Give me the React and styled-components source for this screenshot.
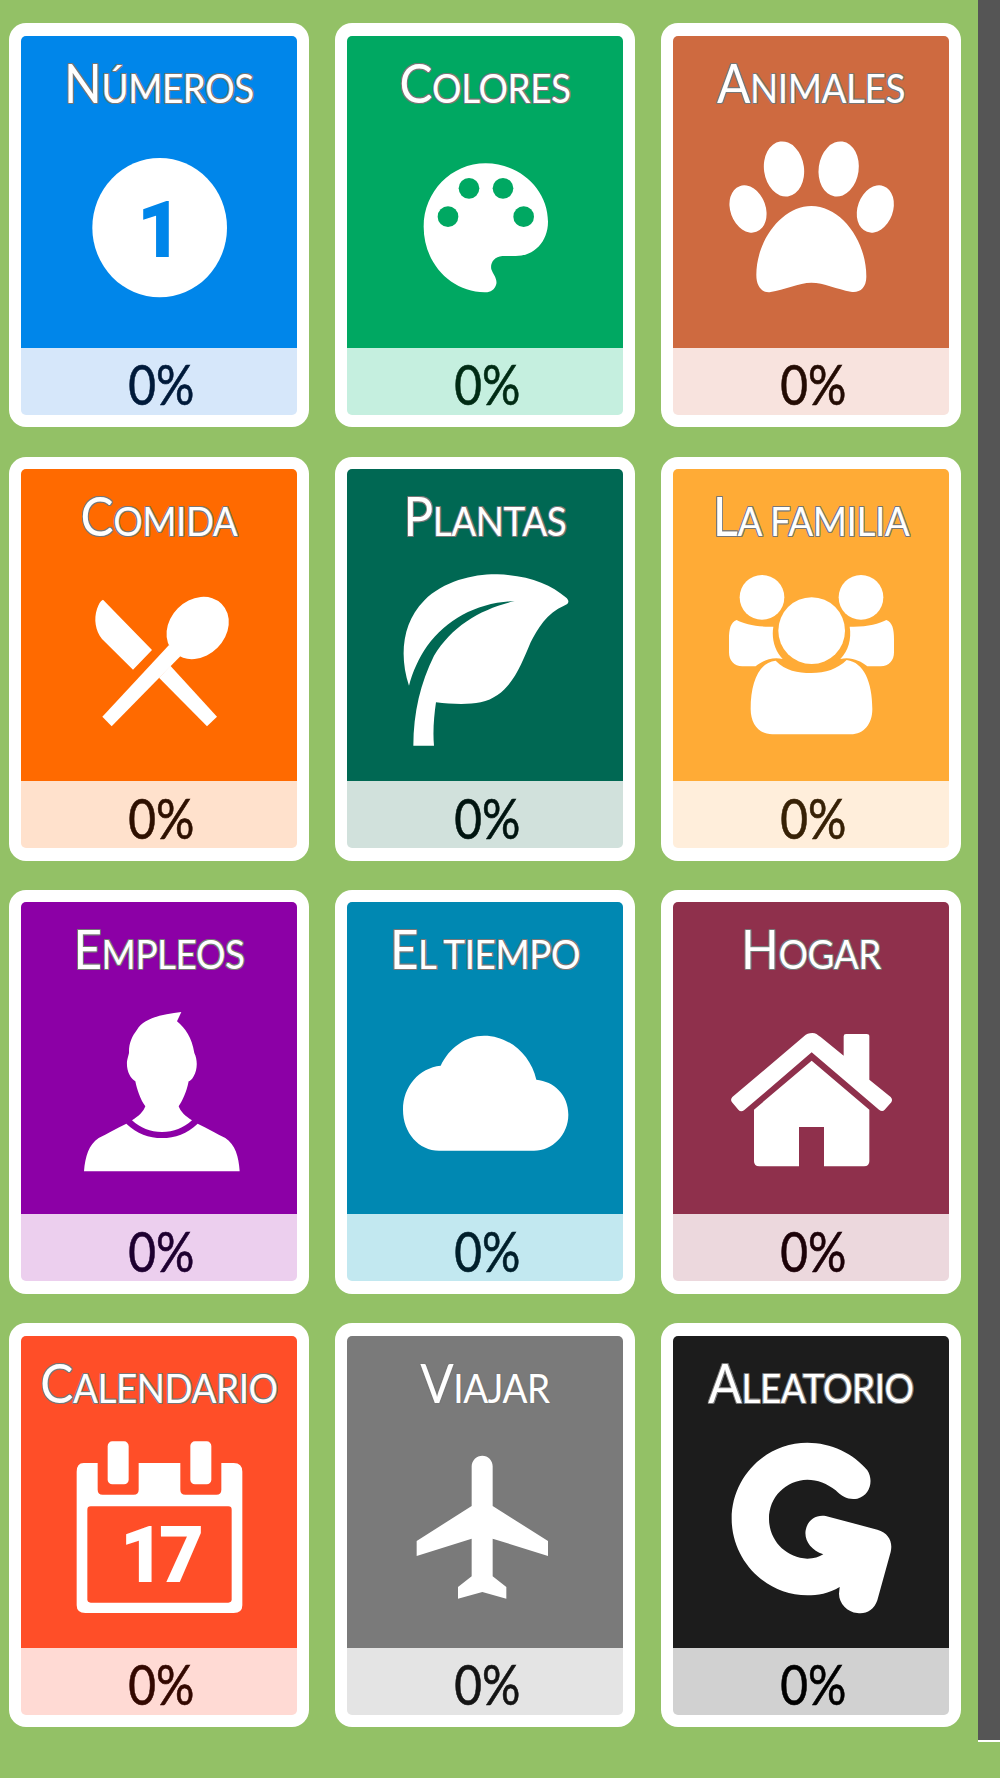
import React from "react";
import styled, { createGlobalStyle } from "styled-components";

const Global = createGlobalStyle`
  html, body {
    margin: 0;
    padding: 0;
    background: #93c166;
  }
`;

const Page = styled.div`
  display: flex;
  align-items: flex-start;
  justify-content: space-between;
  width: 1000px;
  height: 1778px;
  overflow: hidden;
  background: #93c166;
`;

const Grid = styled.section`
  display: grid;
  grid-template-columns: repeat(3, 300px);
  grid-auto-rows: 404px;
  column-gap: 26px;
  row-gap: 29.3px;
  padding: 23.3px 0 0 9px;
`;

const Card = styled.article`
  display: flex;
  flex-direction: column;
  box-sizing: border-box;
  padding: 12.5px 12px;
  background: #fff;
  border-radius: 17px;
`;

const Panel = styled.div`
  flex: 1;
  min-height: 0;
  overflow: hidden;
  background: ${props => props.color};
  border-radius: 5px 5px 0 0;
`;

const Title = styled.h2`
  box-sizing: border-box;
  height: 92px;
  margin: 0;
  padding-top: 18px;
  overflow: visible;
  font-family: "Lato", sans-serif;
  font-size: 41px;
  line-height: 56px;
  font-weight: 400;
  letter-spacing: -0.5px;
  white-space: nowrap;
  text-align: center;
  text-transform: uppercase;
  color: #fff;
  transform: scaleX(0.9);
  text-shadow: 1px 0 0 #777, -1px 0 0 #777, 0 1px 0 #777, 0 -1px 0 #777,
    1px 1px 0 #777, -1px -1px 0 #777, 1px -1px 0 #777, -1px 1px 0 #777;

  &::first-letter {
    font-size: 55px;
  }
`;

const IconSvg = styled.svg`
  display: block;
  width: 275px;
  height: 220px;
  margin: 0 auto;
  fill: #fff;
`;

const Footer = styled.div`
  display: flex;
  align-items: center;
  justify-content: center;
  height: 67px;
  background: ${props => props.color};
  border-radius: 0 0 5px 5px;
`;

const Percent = styled.span`
  display: block;
  margin-left: 4px;
  padding-top: 4px;
  font-family: "Lato", sans-serif;
  font-size: 57px;
  line-height: 62px;
  color: ${props => props.color};
  -webkit-text-stroke: 0.6px ${props => props.color};
  transform: scaleX(0.84);
`;

const ScrollThumb = styled.div`
  flex: none;
  width: 22px;
  height: 1740px;
  background: #555555;
  border-bottom: 2px solid #fff;
`;

const Numeral = styled.text`
  font-family: "Roboto", sans-serif;
  font-weight: 700;
  stroke-width: 6px;
`;

// all icons are drawn in the coordinates of the 3x zoom, the viewBox shifts them into the panel
const box = (col, row) => `${[65, 52, 40][col]} ${[384, 336, 343, 353][row]} 825 660`;

const NumberIcon = ({ bg }) => (
  <IconSvg viewBox={box(0, 0)}>
    <ellipse cx="478" cy="683" rx="202" ry="209" />
    <Numeral x="413" y="767" fontSize="228" fill={bg} stroke={bg}>1</Numeral>
  </IconSvg>
);

const PaletteIcon = ({ bg }) => (
  <IconSvg viewBox={box(1, 0)}>
    <path d="M465 490C570 490 652 570 652 665C652 725 610 768 555 768L515 768C490 770 478 790 482 808C488 825 500 835 497 852C492 870 478 878 462 877C360 875 279 790 279 680C279 575 362 490 465 490Z" />
    <circle cx="415" cy="565" r="31" fill={bg} />
    <circle cx="517" cy="565" r="31" fill={bg} />
    <circle cx="352" cy="650" r="31" fill={bg} />
    <circle cx="579" cy="650" r="31" fill={bg} />
  </IconSvg>
);

const PawIcon = () => (
  <IconSvg viewBox={box(2, 0)}>
    <ellipse cx="370" cy="507" rx="60" ry="83" transform="rotate(-8 370 507)" />
    <ellipse cx="534" cy="507" rx="60" ry="83" transform="rotate(8 534 507)" />
    <ellipse cx="262" cy="627" rx="53" ry="73" transform="rotate(-20 262 627)" />
    <ellipse cx="644" cy="627" rx="53" ry="73" transform="rotate(20 644 627)" />
    <path d="M452 618C540 618 617 720 617 830C617 865 595 880 570 875C530 868 490 848 452 848C415 848 370 870 330 876C305 880 287 860 287 825C287 720 365 618 452 618Z" />
  </IconSvg>
);

const FoodIcon = () => (
  <IconSvg viewBox={box(0, 1)}>
    <path d="M308 452L455 603L398 662L305 570C285 545 280 510 290 480C295 465 300 455 308 452Z" />
    <path d="M510 650L650 803L620 832L476 686Z" />
    <ellipse cx="592" cy="537" rx="84" ry="102" transform="rotate(45 592 537)" />
    <path d="M506 588L540 622L334 832L306 803Z" />
  </IconSvg>
);

const LeafIcon = () => (
  <IconSvg viewBox={box(1, 1)}>
    <path d="M235 710C205 620 215 520 280 455C340 395 430 375 500 376C590 378 660 405 705 445C718 455 715 465 700 470C650 490 620 540 600 580C570 650 540 740 450 760C410 768 360 765 316 760C310 800 306 850 310 890L248 890C248 790 270 700 310 620C365 530 450 480 552 456C440 460 350 510 290 590C265 625 245 670 235 710Z" />
  </IconSvg>
);

const FamilyIcon = () => (
  <IconSvg viewBox={box(2, 1)}>
    <circle cx="304" cy="445" r="67" />
    <circle cx="601" cy="445" r="67" />
    <circle cx="453" cy="545" r="100" />
    <path d="M228 513C250 525 290 535 338 533C332 570 342 605 366 630C335 622 305 635 285 652L245 652C220 652 205 635 205 610L205 570C205 540 210 520 228 513Z" />
    <path d="M677 513C655 525 615 535 567 533C573 570 563 605 539 630C570 622 600 635 620 652L660 652C685 652 700 635 700 610L700 570C700 540 695 520 677 513Z" />
    <path d="M345 635C375 665 410 672 452 672C495 672 530 660 558 633C610 640 635 700 635 780C635 825 610 856 570 856L335 856C295 856 270 825 270 780C270 700 295 640 345 635Z" />
  </IconSvg>
);

const PersonIcon = () => (
  <IconSvg viewBox={box(0, 2)}>
    <path d="M543 397L530 425C555 445 575 475 582 520C592 540 592 570 580 590C575 600 568 605 565 605C558 640 545 665 535 680C540 695 555 710 575 722C550 745 520 757 485 757C450 757 420 745 395 722C415 710 430 695 435 680C420 660 410 630 405 605C390 595 378 575 380 545C382 535 385 525 386 520C385 490 395 470 410 450C430 415 490 403 543 397Z" />
    <path d="M378 732C410 762 445 775 485 775C525 775 560 762 592 732C620 745 650 762 675 775C705 795 715 830 718 875L251 875C255 830 265 795 295 775C320 762 350 745 378 732Z" />
  </IconSvg>
);

const CloudIcon = () => (
  <IconSvg viewBox={box(1, 2)}>
    <path d="M330 558C355 505 405 468 460 468C535 468 600 525 617 600C670 605 713 645 713 705C713 765 665 813 610 813L325 813C265 813 217 760 217 690C217 620 265 565 330 558Z" />
  </IconSvg>
);

const HouseIcon = () => (
  <IconSvg viewBox={box(2, 2)}>
    <path d="M455 460C465 460 470 465 480 472L549 528L549 470Q549 463 556 463L618 463Q626 463 626 470L626 600L690 652Q697 660 692 668L672 690Q665 698 655 690L453 518L250 692Q240 698 233 690L214 668Q208 660 215 652L430 470Q440 460 455 460Z" />
    <path d="M453 543L626 690L626 845Q626 860 610 860L490 860L490 742L415 742L415 860L296 860Q280 860 280 845L280 690Z" />
  </IconSvg>
);

const CalendarIcon = ({ bg }) => (
  <IconSvg viewBox={box(0, 3)}>
    <path d="M250 458L292 458L292 538Q292 553 307 553L400 553Q415 553 415 538L415 458L540 458L540 538Q540 553 555 553L648 553Q663 553 663 538L663 458L700 458Q726 458 726 484L726 885Q726 908 700 908L255 908Q229 908 229 885L229 484Q229 458 250 458Z" />
    <rect x="261" y="588" width="433" height="289" rx="10" fill={bg} />
    <rect x="322" y="393" width="63" height="129" rx="14" />
    <rect x="570" y="393" width="63" height="129" rx="14" />
    <Numeral x="478" y="812" fontSize="226" letterSpacing="-14" textAnchor="middle" stroke="#fff">17</Numeral>
  </IconSvg>
);

const PlaneIcon = () => (
  <IconSvg viewBox={box(1, 3)}>
    <path d="M455 436C472 436 486 450 486 468L486 587L652 692L652 737L486 685L486 798L527 830L527 865L455 845L382 865L382 830L423 798L423 685L258 737L258 692L423 587L423 468C423 450 438 436 455 436Z" />
  </IconSvg>
);

const RandomIcon = () => (
  <IconSvg viewBox={box(2, 3)}>
    <path d="M440 397C510 397 580 430 620 480C640 510 628 555 590 565C565 570 545 560 525 540C500 520 470 508 440 508C375 510 325 560 325 625C325 690 375 742 440 745C460 745 475 740 488 732C450 720 430 690 435 660C440 630 465 612 495 617L650 658C685 668 697 695 690 725L650 870C640 900 615 912 590 908C560 905 535 880 535 850L537 830C505 850 470 855 440 855C315 855 213 750 213 625C213 500 315 397 440 397Z" />
  </IconSvg>
);

const categories = [
  { name: "Números", bg: "#0086ea", light: "#d6e7fa", ink: "#001a3a", Icon: NumberIcon },
  { name: "Colores", bg: "#00a862", light: "#c5efdf", ink: "#002b14", Icon: PaletteIcon },
  { name: "Animales", bg: "#ce6a40", light: "#f8e3de", ink: "#240c04", Icon: PawIcon },
  { name: "Comida", bg: "#ff6a00", light: "#ffe1cc", ink: "#2e1000", Icon: FoodIcon },
  { name: "Plantas", bg: "#006853", light: "#d1e1dc", ink: "#001410", Icon: LeafIcon },
  { name: "La familia", bg: "#ffab36", light: "#ffeedb", ink: "#372106", Icon: FamilyIcon },
  { name: "Empleos", bg: "#8c00a6", light: "#eccfee", ink: "#1e0030", Icon: PersonIcon },
  { name: "El tiempo", bg: "#0088b2", light: "#c2e8f0", ink: "#001f2b", Icon: CloudIcon },
  { name: "Hogar", bg: "#8f304c", light: "#ecd8dd", ink: "#1c0208", Icon: HouseIcon },
  { name: "Calendario", bg: "#ff4e28", light: "#ffdad4", ink: "#330800", Icon: CalendarIcon },
  { name: "Viajar", bg: "#7a7a7a", light: "#e4e4e4", ink: "#141414", Icon: PlaneIcon },
  { name: "Aleatorio", bg: "#1c1c1c", light: "#d1d1d1", ink: "#000000", Icon: RandomIcon },
];

export default function App() {
  return (
    <Page>
      <Global />
      <Grid>
        {categories.map(({ name, bg, light, ink, Icon }) => (
          <Card key={name}>
            <Panel color={bg}>
              <Title>{name}</Title>
              <Icon bg={bg} />
            </Panel>
            <Footer color={light}>
              <Percent color={ink}>0%</Percent>
            </Footer>
          </Card>
        ))}
      </Grid>
      <ScrollThumb />
    </Page>
  );
}
